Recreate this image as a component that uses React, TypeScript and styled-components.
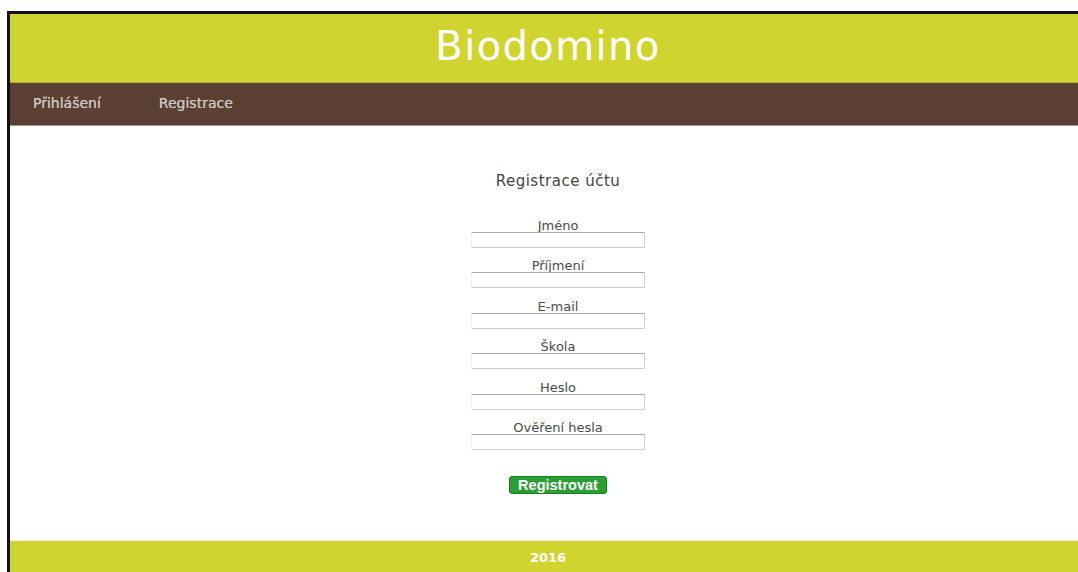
import React from "react";
import styled, { createGlobalStyle } from "styled-components";

const GlobalStyle = createGlobalStyle`
  html, body {
    margin: 0;
    padding: 0;
    overflow: hidden;
    background: #ffffff;
    font-family: "DejaVu Sans", Verdana, sans-serif;
  }
`;

const Frame = styled.div`
  margin: 11px 0 0 7px;
  width: 1076px;
  border-left: 3px solid #111111;
  border-top: 3px solid #111111;
  background: #ffffff;
`;

const Header = styled.header`
  box-sizing: border-box;
  height: 69px;
  padding-top: 10px;
  background: #d0d42f;
  border-bottom: 1px solid #b3b62a;
  text-align: center;
`;

const Title = styled.h1`
  margin: 0;
  font-size: 40px;
  font-weight: normal;
  line-height: 44px;
  letter-spacing: 1.4px;
  color: #ffffff;
`;

const Nav = styled.nav`
  display: flex;
  gap: 58px;
  height: 42px;
  padding-left: 23px;
  background: #5b4033;
  border-bottom: 1px solid #a39289;
`;

const NavLink = styled.a`
  font-size: 14px;
  line-height: 41px;
  color: #cdc5bf;
  text-shadow: 0 0 0.6px #cdc5bf;
  text-decoration: none;
  cursor: pointer;
`;

const Main = styled.main`
  display: flex;
  flex-direction: column;
  align-items: center;
  padding: 46px 0 46px 20px;
`;

const Heading = styled.h2`
  margin: 0 0 30px;
  font-size: 15px;
  font-weight: normal;
  line-height: 18px;
  letter-spacing: 0.5px;
  color: #444444;
`;

const Form = styled.form`
  display: flex;
  flex-direction: column;
  align-items: center;
  gap: 12.4px;
`;

const Field = styled.label`
  display: flex;
  flex-direction: column;
  align-items: center;
`;

const FieldName = styled.span`
  font-size: 13px;
  line-height: 12px;
  color: #4a4a4a;
`;

const Input = styled.input`
  box-sizing: border-box;
  width: 174px;
  height: 16px;
  margin: 0;
  padding: 0 2px;
  border: 1px solid #cfcfcf;
  border-top-color: #a9a9a9;
  border-left-color: #f2f2f2;
  background: #ffffff;
  outline: none;
`;

const Submit = styled.button`
  margin-top: 14px;
  height: 18px;
  padding: 0 8px;
  border: 1px solid #1c7a22;
  border-radius: 3px;
  background: #2c9e35;
  font-family: "Liberation Sans", Arial, sans-serif;
  font-size: 14.5px;
  font-weight: bold;
  line-height: 16px;
  color: #ffffff;
  cursor: pointer;
`;

const Footer = styled.footer`
  padding: 2px 0;
  border-top: 1px solid #f1f2d6;
  background: #d0d42f;
  text-align: center;
  font-size: 13px;
  font-weight: bold;
  line-height: 30px;
  color: #ffffff;
`;

const fields = [
  { name: "jmeno", label: "Jméno", type: "text" },
  { name: "prijmeni", label: "Příjmení", type: "text" },
  { name: "email", label: "E-mail", type: "email" },
  { name: "skola", label: "Škola", type: "text" },
  { name: "heslo", label: "Heslo", type: "password" },
  { name: "heslo2", label: "Ověření hesla", type: "password" },
];

const App: React.FC = () => {
  return (
    <>
      <GlobalStyle />
      <Frame>
        <Header>
          <Title>Biodomino</Title>
        </Header>
        <Nav>
          <NavLink>Přihlášení</NavLink>
          <NavLink>Registrace</NavLink>
        </Nav>
        <Main>
          <Heading>Registrace účtu</Heading>
          <Form onSubmit={(e) => e.preventDefault()}>
            {fields.map((f) => (
              <Field key={f.name}>
                <FieldName>{f.label}</FieldName>
                <Input name={f.name} type={f.type} />
              </Field>
            ))}
            <Submit type="submit">Registrovat</Submit>
          </Form>
        </Main>
        <Footer>2016</Footer>
      </Frame>
    </>
  );
};

export default App;
